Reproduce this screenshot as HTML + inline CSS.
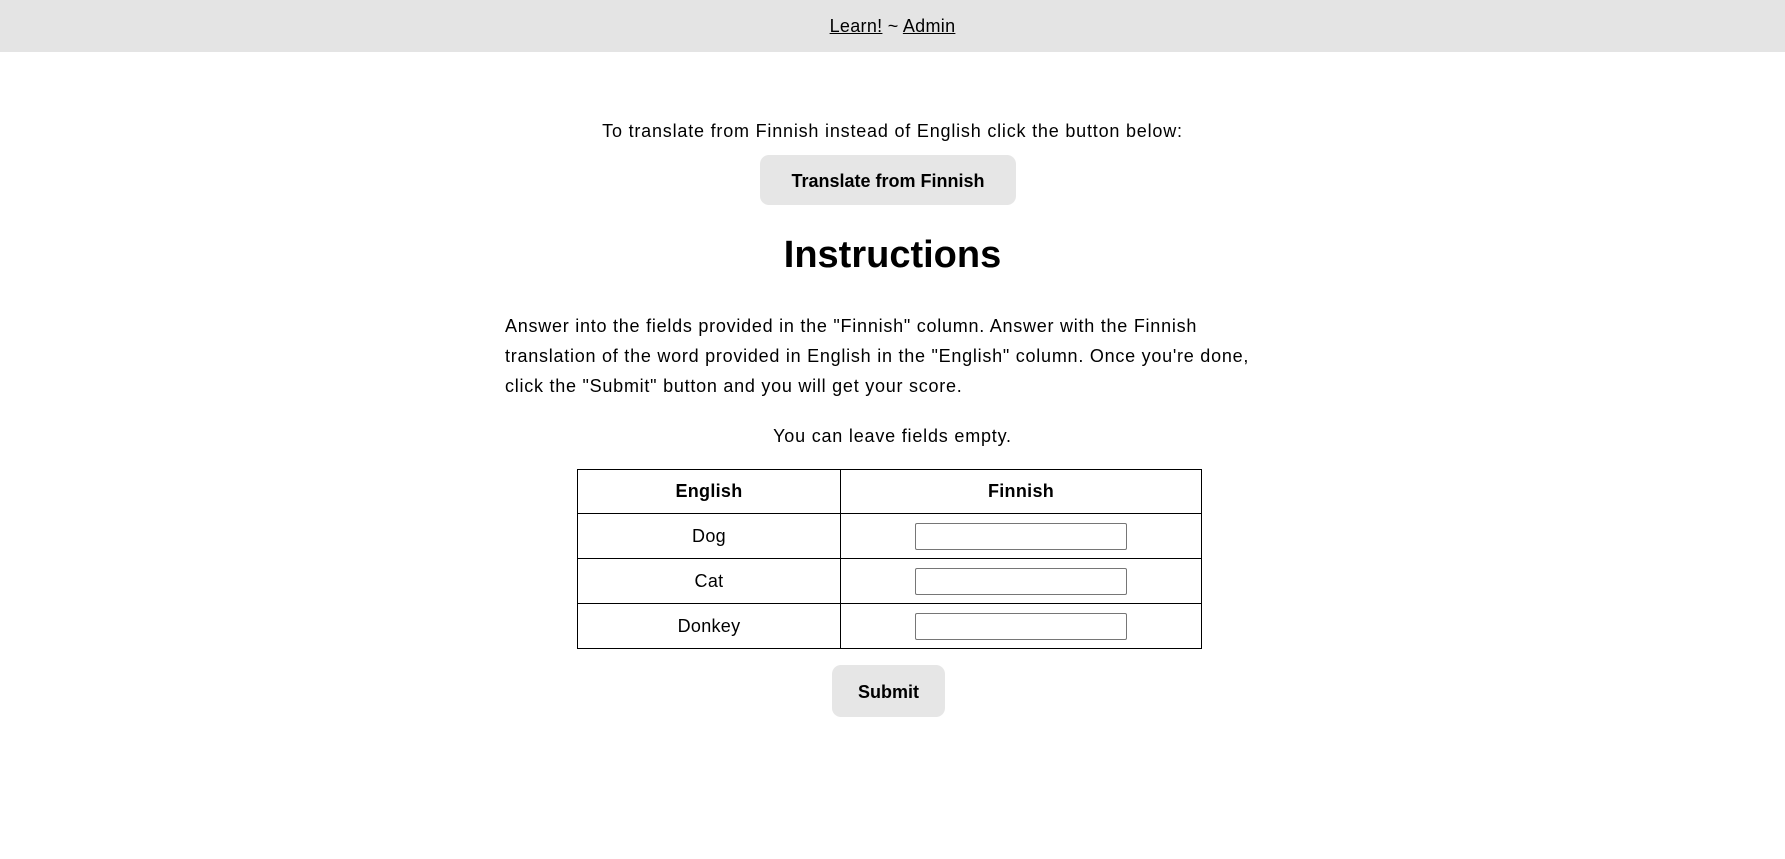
<!DOCTYPE html>
<html><head><style>
*{box-sizing:border-box}
body{margin:0;width:1785px;height:859px;background:#fff;font-family:"Liberation Sans",sans-serif;color:#000;position:relative;overflow:hidden}
.hdr{position:absolute;left:0;top:0;width:1785px;height:52px;background:#e4e4e4;text-align:center;font-size:18px;line-height:53px;letter-spacing:0.3px}
.hdr a{color:#000;text-decoration:underline}
.abs{position:absolute;left:0;width:1785px;text-align:center;font-size:18px;white-space:nowrap;letter-spacing:0.8px}
.btn{position:absolute;background:#e6e6e6;border-radius:9px;font-weight:bold;font-size:18px;display:flex;align-items:center;justify-content:center;padding-top:2px}
h1{position:absolute;left:0;width:1785px;text-align:center;margin:0;font-size:38px;top:231px;line-height:48px}
.p{position:absolute;left:505px;top:311px;font-size:18px;line-height:30px;white-space:nowrap;letter-spacing:0.75px}
table{position:absolute;left:577px;top:469px;width:625px;border-collapse:collapse;font-size:18px;letter-spacing:0.3px}
td,th{border:1px solid #000;text-align:center;height:45px;padding:0}
th{height:44px}
input{width:212px;height:27px;border:1px solid #767676;border-radius:2px}
</style></head><body>
<div class="hdr"><a>Learn!</a> ~ <a>Admin</a></div>
<div class="abs" style="top:121px">To translate from Finnish instead of English click the button below:</div>
<div class="btn" style="left:760px;top:155px;width:256px;height:50px">Translate from Finnish</div>
<h1>Instructions</h1>
<div class="p">Answer into the fields provided in the "Finnish" column. Answer with the Finnish<br>translation of the word provided in English in the "English" column. Once you're done,<br>click the "Submit" button and you will get your score.</div>
<div class="abs" style="top:426px">You can leave fields empty.</div>
<table>
<tr><th style="width:263px">English</th><th>Finnish</th></tr>
<tr><td>Dog</td><td><input></td></tr>
<tr><td>Cat</td><td><input></td></tr>
<tr><td>Donkey</td><td><input></td></tr>
</table>
<div class="btn" style="left:832px;top:665px;width:113px;height:52px">Submit</div>
</body></html>
